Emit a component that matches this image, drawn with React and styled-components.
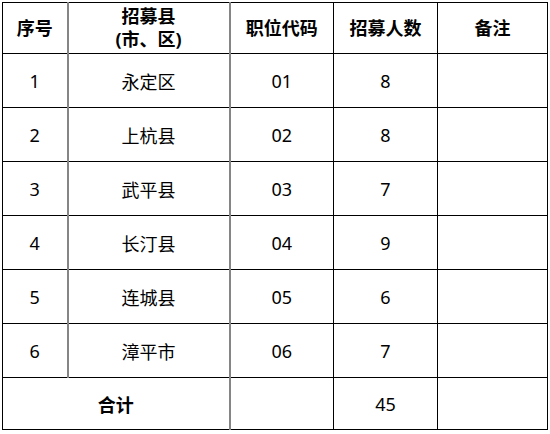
import React from 'react';
import styled, { createGlobalStyle } from 'styled-components';

const GlobalStyle = createGlobalStyle`
  html, body {
    margin: 0;
    padding: 0;
    background: #fff;
  }
  body {
    font-family: "Noto Sans", "Noto Sans CJK SC", sans-serif;
    color: #000;
  }
`;

const rows = [
  { no: '1', county: '永定区', code: '01', count: '8' },
  { no: '2', county: '上杭县', code: '02', count: '8' },
  { no: '3', county: '武平县', code: '03', count: '7' },
  { no: '4', county: '长汀县', code: '04', count: '9' },
  { no: '5', county: '连城县', code: '05', count: '6' },
  { no: '6', county: '漳平市', code: '06', count: '7' },
];

const Page = styled.div`
  padding: 2px 0 0 2px;
`;

const Table = styled.table`
  border-collapse: collapse;
  table-layout: fixed;
  width: 545px;
  border: 1px solid #000;
`;

const Col = styled.col`
  width: ${props => props.w}px;
`;

const Row = styled.tr`
  height: ${props => props.h}px;
`;

const Head = styled.th`
  border: 1px solid #000;
  border-right: ${props => props.grey ? '2px solid #858585' : '1px solid #000'};
  font-size: 18px;
  font-weight: 700;
  line-height: 23px;
  text-align: center;
  vertical-align: middle;
  padding: 0;
`;

const Cell = styled.td`
  border: 1px solid #000;
  border-right: ${props => props.grey ? '2px solid #858585' : '1px solid #000'};
  font-size: 18px;
  font-weight: ${props => props.bold ? 700 : 400};
  text-align: center;
  vertical-align: middle;
  padding: 0;
`;

export default function App() {
  return (
    <Page>
      <GlobalStyle />
      <Table>
        <colgroup>
          <Col w={65} />
          <Col w={162} />
          <Col w={104} />
          <Col w={104} />
          <Col w={110} />
        </colgroup>
        <thead>
          <Row h={51}>
            <Head grey>序号</Head>
            <Head grey>招募县<br />(市、区)</Head>
            <Head>职位代码</Head>
            <Head>招募人数</Head>
            <Head>备注</Head>
          </Row>
        </thead>
        <tbody>
          {rows.map(r => (
            <Row h={54} key={r.no}>
              <Cell grey>{r.no}</Cell>
              <Cell grey>{r.county}</Cell>
              <Cell>{r.code}</Cell>
              <Cell>{r.count}</Cell>
              <Cell />
            </Row>
          ))}
          <Row h={52}>
            <Cell colSpan={2} grey bold>合计</Cell>
            <Cell />
            <Cell>45</Cell>
            <Cell />
          </Row>
        </tbody>
      </Table>
    </Page>
  );
}
